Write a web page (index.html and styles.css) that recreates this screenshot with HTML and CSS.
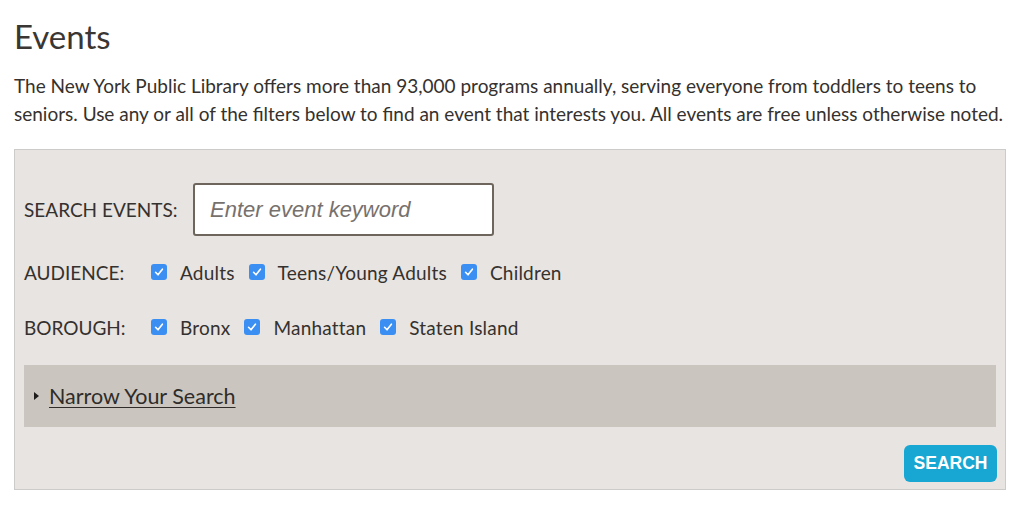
FILE: index.html
```html
<!DOCTYPE html>
<html lang="en">
<head>
<meta charset="utf-8">
<title>Events</title>
<link rel="stylesheet" href="styles.css">
</head>
<body>
<main class="page">
  <h1 class="title">Events</h1>
  <p class="intro">The New York Public Library offers more than 93,000 programs annually, serving everyone from toddlers to teens to seniors. Use any or all of the filters below to find an event that interests you. All events are free unless otherwise noted.</p>
  <form class="panel">
    <div class="row search-row">
      <label class="label search-label" for="kw">SEARCH EVENTS:</label>
      <input class="keyword" id="kw" type="text" placeholder="Enter event keyword">
    </div>
    <div class="row check-row audience">
      <span class="label fixed">AUDIENCE:</span>
      <span class="opt"><span class="box"><svg viewBox="0 0 16 16" width="16" height="16"><path d="M4.6 8.3 L7 10.8 L11.4 5.2" fill="none" stroke="#fff" stroke-width="1.6" stroke-linecap="round" stroke-linejoin="round"/></svg></span>Adults</span>
      <span class="opt"><span class="box"><svg viewBox="0 0 16 16" width="16" height="16"><path d="M4.6 8.3 L7 10.8 L11.4 5.2" fill="none" stroke="#fff" stroke-width="1.6" stroke-linecap="round" stroke-linejoin="round"/></svg></span>Teens/Young Adults</span>
      <span class="opt"><span class="box"><svg viewBox="0 0 16 16" width="16" height="16"><path d="M4.6 8.3 L7 10.8 L11.4 5.2" fill="none" stroke="#fff" stroke-width="1.6" stroke-linecap="round" stroke-linejoin="round"/></svg></span>Children</span>
    </div>
    <div class="row check-row borough">
      <span class="label fixed">BOROUGH:</span>
      <span class="opt"><span class="box"><svg viewBox="0 0 16 16" width="16" height="16"><path d="M4.6 8.3 L7 10.8 L11.4 5.2" fill="none" stroke="#fff" stroke-width="1.6" stroke-linecap="round" stroke-linejoin="round"/></svg></span>Bronx</span>
      <span class="opt"><span class="box"><svg viewBox="0 0 16 16" width="16" height="16"><path d="M4.6 8.3 L7 10.8 L11.4 5.2" fill="none" stroke="#fff" stroke-width="1.6" stroke-linecap="round" stroke-linejoin="round"/></svg></span>Manhattan</span>
      <span class="opt"><span class="box"><svg viewBox="0 0 16 16" width="16" height="16"><path d="M4.6 8.3 L7 10.8 L11.4 5.2" fill="none" stroke="#fff" stroke-width="1.6" stroke-linecap="round" stroke-linejoin="round"/></svg></span>Staten Island</span>
    </div>
    <div class="narrow">
      <span class="tri"></span>
      <a class="narrow-link" href="#">Narrow Your Search</a>
    </div>
    <div class="actions">
      <button class="btn" type="button">SEARCH</button>
    </div>
  </form>
</main>
</body>
</html>
```

FILE: styles.css
```css
* { box-sizing: border-box; }
html, body { margin: 0; padding: 0; background: #fff; }
body {
  font-family: Lato, "Open Sans", sans-serif;
  color: #35312e;
}
.page {
  padding: 14px 18px 0 14px;
  width: 1024px;
}
.title {
  margin: 0;
  font-size: 33px;
  font-weight: 400;
  line-height: 44px;
  color: #3a3633;
}
.intro {
  margin: 14px 0 21px 0;
  width: 992px;
  font-size: 19px;
  line-height: 28px;
  color: #35312e;
}
.panel {
  width: 992px;
  height: 341px;
  background: #e8e4e1;
  border: 1px solid #cdcbc9;
  padding: 33px 9px 0 9px;
  margin: 0;
}
.row {
  display: flex;
  align-items: center;
}
.search-row { height: 53px; margin-bottom: 24px; }
.label {
  font-size: 19px;
  color: #35312e;
}
.search-label { width: 169px; }
.keyword {
  width: 301px;
  height: 53px;
  border: 2px solid #6e655d;
  border-radius: 3px;
  background: #fff;
  padding: 0 15px;
  font-family: "Liberation Sans", Arial, sans-serif;
  font-size: 22px;
  font-style: italic;
  color: #333;
  outline: none;
}
.keyword::placeholder { color: #77716d; font-style: italic; }
.check-row { height: 24px; }
.audience { margin-bottom: 31px; }
.borough { margin-bottom: 26px; }
.fixed { width: 127px; }
.opt {
  display: inline-flex;
  align-items: center;
  font-size: 19px;
  letter-spacing: 0.2px;
  color: #35312e;
  margin-right: 14px;
}
.box {
  width: 16px;
  height: 16px;
  border-radius: 3px;
  background: #3b8ff3;
  margin-right: 13px;
  display: inline-block;
}
.box svg { display: block; }
.narrow {
  height: 62px;
  background: #cac6bf;
  display: flex;
  align-items: center;
  padding-left: 10px;
}
.tri {
  width: 0;
  height: 0;
  border-top: 4.5px solid transparent;
  border-bottom: 4.5px solid transparent;
  border-left: 5px solid #1e1c1a;
  margin-right: 10px;
}
.narrow-link {
  font-size: 21.5px;
  color: #2f2c29;
  text-decoration: underline;
  text-underline-offset: 3px;
  text-decoration-thickness: 1px;
}
.actions {
  display: flex;
  justify-content: flex-end;
  padding-top: 18px;
}
.btn {
  width: 93px;
  height: 37px;
  border: none;
  border-radius: 6px;
  background: #18a6d2;
  color: #fff;
  font-family: "Liberation Sans", Arial, sans-serif;
  font-weight: 700;
  font-size: 17.5px;
  padding: 0;
  margin-right: -1px;
}
```
